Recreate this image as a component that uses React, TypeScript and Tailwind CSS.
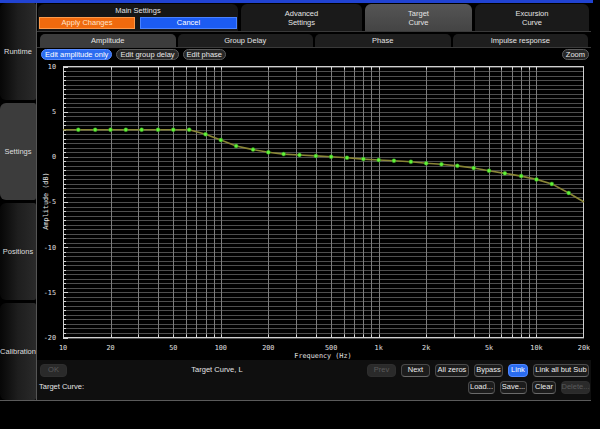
import React from 'react';

const X0 = 63;
const X1 = 584;
const Y0 = 66.5;
const Y1 = 337.5;

const fx = (f: number) => X0 + ((X1 - X0) * Math.log10(f / 10)) / Math.log10(2000);
const dy = (db: number) => Y0 + ((10 - db) * (Y1 - Y0)) / 30;

const points: [number, number][] = [
  [12.5, 3], [16, 3], [20, 3], [25, 3], [31.5, 3], [40, 3], [50, 3], [63, 3],
  [80, 2.5], [100, 1.85], [125, 1.2], [160, 0.8], [200, 0.5], [250, 0.3],
  [315, 0.2], [400, 0.1], [500, 0], [630, -0.1], [800, -0.25], [1000, -0.35],
  [1250, -0.43], [1600, -0.55], [2000, -0.72], [2500, -0.83], [3150, -1.0],
  [4000, -1.24], [5000, -1.54], [6300, -1.83], [8000, -2.13], [10000, -2.5],
  [12500, -3.0], [16000, -4.0],
];

const gridFreqs: number[] = [];
[10, 100, 1000, 10000].forEach((d) => {
  for (let i = 1; i <= 9; i++) {
    const f = d * i;
    if (f > 10 && f < 20000) gridFreqs.push(f);
  }
});

const xLabels: [number, string][] = [
  [10, '10'], [20, '20'], [50, '50'], [100, '100'], [200, '200'], [500, '500'],
  [1000, '1k'], [2000, '2k'], [5000, '5k'], [10000, '10k'], [20000, '20k'],
];

const crisp = (v: number) => Math.round(v) + 0.5;

function Chart() {
  const hLines: number[] = [];
  for (let db = -20; db <= 10; db += 0.5) hLines.push(db);
  const curve = [[10, 3] as [number, number], ...points, [20000, -5] as [number, number]]
    .map(([f, d]) => `${fx(f).toFixed(1)},${dy(d).toFixed(1)}`)
    .join(' ');
  return (
    <svg width={553} height={299} viewBox="37 61 553 299" className="block">
      <rect x={37} y={61} width={553} height={299} fill="#000" />
      {hLines.map((d) => (
        <line key={'h' + d} x1={X0} x2={X1} y1={crisp(dy(d))} y2={crisp(dy(d))} stroke="#4e4e4e" strokeWidth={1} />
      ))}
      {gridFreqs.map((f) => (
        <line key={'v' + f} x1={crisp(fx(f))} x2={crisp(fx(f))} y1={Y0} y2={Y1} stroke="#7c7c7c" strokeWidth={1} />
      ))}
      {hLines.map((d) => (
        <line key={'t' + d} x1={X0} x2={X0 + (d % 5 === 0 ? 5 : 3)} y1={crisp(dy(d))} y2={crisp(dy(d))} stroke="#d8d8d8" strokeWidth={1} />
      ))}
      {gridFreqs.map((f) => (
        <g key={'bt' + f}>
          <line x1={crisp(fx(f))} x2={crisp(fx(f))} y1={Y1 - 3} y2={Y1} stroke="#d8d8d8" strokeWidth={1} />
          <line x1={crisp(fx(f))} x2={crisp(fx(f))} y1={Y0} y2={Y0 + 3} stroke="#d8d8d8" strokeWidth={1} />
        </g>
      ))}
      <rect x={X0 + 0.5} y={Y0} width={X1 - X0 - 1} height={Y1 - Y0} fill="none" stroke="#d0d0d0" strokeWidth={1} />
      <polyline points={curve} fill="none" stroke="#8a8636" strokeWidth={1.6} />
      {points.map(([f, d]) => (
        <circle key={'p' + f} cx={fx(f)} cy={dy(d)} r={2} fill="#62f23a" stroke="#2f8a1a" strokeWidth={0.5} />
      ))}
      <g fontFamily="'DejaVu Sans Mono', 'Liberation Mono', monospace" fontSize={6.8} fill="#e2e2e2">
        {[10, 5, 0, -5, -10, -15, -20].map((d) => (
          <text key={'yl' + d} x={56} y={dy(d) + 2.4} textAnchor="end">{d}</text>
        ))}
        {xLabels.map(([f, t]) => (
          <text key={'xl' + f} x={fx(f)} y={350} textAnchor="middle">{t}</text>
        ))}
        <text x={323} y={357.5} textAnchor="middle">Frequency (Hz)</text>
        <text x={0} y={0} textAnchor="middle" transform="translate(47.5 201) rotate(-90)">Amplitude (dB)</text>
      </g>
    </svg>
  );
}

function SideTab({ label, active }: { label: string; active?: boolean }) {
  return (
    <div
      className={
        'h-[97px] rounded-l-[6px] rounded-r-[2px] flex items-center justify-center ' +
        (active ? 'bg-[#3c3c3c]' : 'bg-gradient-to-r from-[#070707] via-[#1e1e1e] to-[#2a2a2a]')
      }
    >
      <span className="text-[7.5px] text-[#dedede]">{label}</span>
    </div>
  );
}

function Pill({ label, blue }: { label: string; blue?: boolean }) {
  return (
    <div
      className={
        'h-[11px] px-[3px] rounded-full border flex items-center justify-center leading-none ' +
        (blue ? 'bg-[#2c6cf0] border-[#5a8cff] text-white' : 'bg-[#262626] border-[#5c5c5c] text-[#e8e8e8]')
      }
    >
      {label}
    </div>
  );
}

function Btn({ label, w, kind }: { label: string; w: string; kind?: 'off' | 'blue' }) {
  const look =
    kind === 'off'
      ? 'bg-[#2a2a2a] border-[#2e2e2e] text-[#5a5a5a]'
      : kind === 'blue'
        ? 'bg-[#2a6cf0] border-[#4f86ff] text-white'
        : 'bg-[#1c1c1c] border-[#4a4a4a] border-b-[#6a6a6a] text-[#ececec]';
  return (
    <div className={'h-[13px] rounded-[4px] border flex items-center justify-center leading-none ' + w + ' ' + look}>
      {label}
    </div>
  );
}

export default function App() {
  return (
    <div className="w-[600px] h-[429px] bg-black overflow-hidden text-[7.5px] text-[#e4e4e4] font-['Liberation_Sans',Arial,sans-serif]">
      <div className="h-[3px] w-[593px] bg-[#2143d2]" />
      <div className="flex w-[591px] h-[398px] border-b border-[#5a5a5a]">
        <div className="w-[37px] border-r border-[#555] flex flex-col gap-[3px]">
          <SideTab label="Runtime" />
          <SideTab label="Settings" active />
          <SideTab label="Positions" />
          <SideTab label="Calibration" />
        </div>
        <div className="flex-1 flex flex-col">
          <div className="h-[29px] flex gap-[3px] pl-[1px] pt-[1px] border-b border-[#3a3a3a]">
            <div className="w-[200px] rounded-t-[6px] bg-[#161616] flex flex-col items-center">
              <div className="h-[13px] flex items-center">Main Settings</div>
              <div className="flex gap-[5px] w-full px-[1px]">
                <div className="w-[96px] h-[12px] bg-[#f06a0e] border border-[#ff9a4a] flex items-center justify-center text-[#ffe4cc]">
                  Apply Changes
                </div>
                <div className="w-[97px] h-[12px] bg-[#1c5cf2] border border-[#4a82ff] flex items-center justify-center text-white">
                  Cancel
                </div>
              </div>
            </div>
            <div className="w-[121px] rounded-t-[6px] bg-[#1a1a1a] flex flex-col items-center justify-center leading-[9px]">
              <span>Advanced</span>
              <span>Settings</span>
            </div>
            <div className="w-[107px] rounded-t-[6px] bg-gradient-to-b from-[#555] to-[#444] flex flex-col items-center justify-center leading-[9px]">
              <span>Target</span>
              <span>Curve</span>
            </div>
            <div className="flex-1 rounded-t-[6px] bg-[#1a1a1a] flex flex-col items-center justify-center leading-[9px] mr-[2px]">
              <span>Excursion</span>
              <span>Curve</span>
            </div>
          </div>
          <div className="h-[16px] flex gap-[2px] px-[3px] pt-[2px] border-b border-[#3a3a3a]">
            <div className="flex-1 rounded-t-[5px] bg-[#3c3c3c] flex items-center justify-center">Amplitude</div>
            <div className="flex-1 rounded-t-[5px] bg-[#1e1e1e] flex items-center justify-center">Group Delay</div>
            <div className="flex-1 rounded-t-[5px] bg-[#1e1e1e] flex items-center justify-center">Phase</div>
            <div className="flex-1 rounded-t-[5px] bg-[#1e1e1e] flex items-center justify-center">Impulse response</div>
          </div>
          <div className="h-[13px] flex items-center gap-[4px] pl-[4px] pr-[2px]">
            <Pill label="Edit amplitude only" blue />
            <Pill label="Edit group delay" />
            <Pill label="Edit phase" />
            <div className="flex-1" />
            <Pill label="Zoom" />
          </div>
          <Chart />
          <div className="flex-1 bg-[#0f0f0f] flex flex-col pt-[3px]">
            <div className="flex items-center h-[14px] pl-[3px] pr-[2px]">
              <Btn label="OK" w="w-[27px]" kind="off" />
              <div className="flex-1 text-center">Target Curve, L</div>
              <div className="flex gap-[5px]">
                <Btn label="Prev" w="w-[29px]" kind="off" />
                <Btn label="Next" w="w-[29px]" />
                <Btn label="All zeros" w="w-[34px]" />
                <Btn label="Bypass" w="w-[29px]" />
                <Btn label="Link" w="w-[20px]" kind="blue" />
                <Btn label="Link all but Sub" w="w-[56px]" />
              </div>
            </div>
            <div className="flex items-center h-[14px] mt-[3px] pl-[2px] pr-[1px]">
              <span>Target Curve:</span>
              <div className="flex-1" />
              <div className="flex gap-[5px]">
                <Btn label="Load..." w="w-[27px]" />
                <Btn label="Save..." w="w-[27px]" />
                <Btn label="Clear" w="w-[24px]" />
                <Btn label="Delete..." w="w-[29px]" kind="off" />
              </div>
            </div>
          </div>
        </div>
      </div>
    </div>
  );
}
